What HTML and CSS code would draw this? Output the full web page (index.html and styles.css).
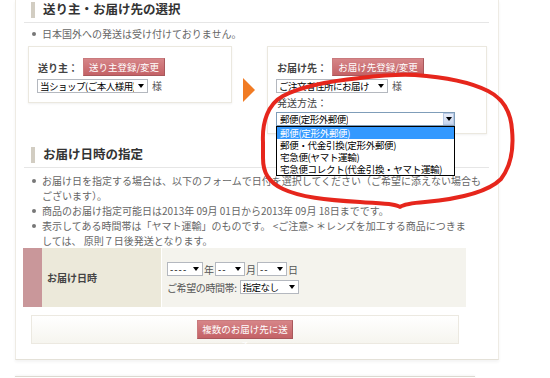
FILE: index.html
```html
<!DOCTYPE html>
<html>
<head>
    <meta charset="utf-8">
    <title>お届け先の選択</title>
    <link rel="stylesheet" href="styles.css">
</head>
<body>
<div class="page">
    <div class="panel">
        <h2 class="sec-title">送り主・お届け先の選択</h2>
        <ul class="notes first">
            <li>日本国外への発送は受け付けておりません。</li>
        </ul>

        <div class="addr-row">
            <div class="addr-box sender">
                <div class="addr-head">
                    <span class="addr-label">送り主：</span>
                    <button class="btn btn-sender">送り主登録/変更</button>
                </div>
                <div class="addr-line">
                    <span class="sel sel-sender"><span class="sel-text">当ショップ(ご本人様用)</span></span>
                    <span class="sama">様</span>
                </div>
            </div>

            <div class="arrow"></div>

            <div class="addr-box dest">
                <div class="addr-head">
                    <span class="addr-label">お届け先：</span>
                    <button class="btn btn-dest">お届け先登録/変更</button>
                </div>
                <div class="addr-line">
                    <span class="sel sel-dest"><span class="sel-text">ご注文者住所にお届け</span></span>
                    <span class="sama">様</span>
                </div>
                <div class="method-label">発送方法：</div>
                <div class="method-wrap">
                    <span class="sel-open">
                        <span class="sel-text">郵便(定形外郵便)</span>
                        <span class="drop-btn"></span>
                    </span>
                    <ul class="drop-list">
                        <li class="active">郵便(定形外郵便)</li>
                        <li>郵便・代金引換(定形外郵便)</li>
                        <li>宅急便(ヤマト運輸)</li>
                        <li>宅急便コレクト(代金引換・ヤマト運輸)</li>
                    </ul>
                </div>
            </div>
        </div>

        <h2 class="sec-title second">お届け日時の指定</h2>
        <ul class="notes">
            <li>お届け日を指定する場合は、以下のフォームで日付を選択してください（ご希望に添えない場合も<br>ございます）。</li>
            <li>商品のお届け指定可能日は2013年 09月 01日から2013年 09月 18日までです。</li>
            <li>表示してある時間帯は「ヤマト運輸」のものです。 &lt;ご注意&gt; ＊レンズを加工する商品につきま<br>しては、 原則７日後発送となります。</li>
        </ul>

        <div class="date-table">
            <div class="mark"></div>
            <div class="date-label">お届け日時</div>
            <div class="date-value">
                <div class="date-row">
                    <span class="sel sel-year"><span class="sel-text dash">----</span></span>
                    <span class="unit">年</span>
                    <span class="sel sel-md"><span class="sel-text dash">--</span></span>
                    <span class="unit">月</span>
                    <span class="sel sel-md"><span class="sel-text dash">--</span></span>
                    <span class="unit">日</span>
                </div>
                <div class="date-row">
                    <span class="time-label">ご希望の時間帯:</span>
                    <span class="sel sel-time"><span class="sel-text">指定なし</span></span>
                </div>
            </div>
        </div>

        <div class="multi-box">
            <button class="btn btn-multi">複数のお届け先に送る</button>
        </div>
    </div>

    <div class="panel-next"></div>

    <!-- hand-drawn marker around the shipping method menu -->
    <svg class="marker" width="550" height="378" viewBox="0 0 550 378">
        <path d="M263 142 C262 122 268 104 283 96 C300 87 330 81 360 78 C385 75 400 74 415 75 C445 77 470 82 488 91 C504 99 511 114 512 130 C514 150 510 167 501 179 C487 193 458 199 425 202 C412 203 404 204 400 207 C396 204 388 204 360 202 C325 200 300 197 283 189 C268 182 263 172 263 158 L263 142"
              fill="none" stroke="#e6261c" stroke-width="4" stroke-linecap="round" stroke-linejoin="round"/>
    </svg>
</div>
</body>
</html>
```

FILE: styles.css
```css
body {
    margin: 0;
    background-color: #fff;
    font-family: "Noto Sans CJK JP", sans-serif;
    font-size: 10px;
    color: #555;
}

.page {
    position: relative;
    width: 550px;
    height: 378px;
    overflow: hidden;
}

.panel {
    margin-left: 15px;
    width: 484px;
    box-sizing: border-box;
    padding: 0 9px 15px 8px;
    border-left: 1px solid #eeebe4;
    border-right: 1px solid #eeebe4;
    border-bottom: 1px solid #e4e1d8;
    box-shadow: 0 2px 3px rgba(0, 0, 0, 0.05);
}

.sec-title {
    margin: 0;
    height: 22px;
    border-bottom: 1px solid #e6e6e6;
    display: flex;
    align-items: flex-start;
    padding-left: 7px;
    font-size: 12.5px;
    line-height: 18px;
    color: #333;
}

.sec-title::before {
    content: "";
    width: 4px;
    height: 16px;
    margin-top: 2px;
    margin-right: 8px;
    background-color: #d2cdc2;
}

.sec-title.second {
    margin-top: 11px;
}

.notes {
    list-style: none;
    margin: 0;
    padding: 5px 0 0 0;
    line-height: 15px;
    white-space: nowrap;
    color: #666;
}

.notes.first {
    padding-top: 3px;
}

.notes li {
    display: flex;
}

.notes li::before {
    content: "";
    flex: none;
    width: 4px;
    height: 4px;
    border-radius: 50%;
    background-color: #777;
    margin: 6px 6px 0 8px;
}

.addr-row {
    display: flex;
    align-items: flex-start;
    margin: 5px 0 0 4px;
}

.addr-box {
    box-sizing: border-box;
    border: 1px solid #ebe8df;
    box-shadow: 0 1px 2px rgba(0, 0, 0, 0.06);
    background-color: #fff;
    padding: 11px 9px 9px 9px;
}

.sender {
    width: 204px;
}

.dest {
    width: 220px;
    padding-bottom: 7px;
}

.addr-head {
    display: flex;
    align-items: center;
    height: 18px;
}

.addr-label {
    font-weight: bold;
    color: #444;
    margin-right: 5px;
}

.addr-line {
    display: flex;
    align-items: center;
    margin-top: 2px;
    margin-left: -1px;
}

.sama {
    margin-left: 4px;
    color: #555;
}

.arrow {
    flex: none;
    width: 0;
    height: 0;
    margin: 32px 12px 0 11px;
    border-left: 12px solid #f17b23;
    border-top: 12px solid transparent;
    border-bottom: 12px solid transparent;
}

.btn {
    height: 18px;
    padding: 0 4px;
    border: 1px solid #a8585c;
    border-top-color: #c97a7d;
    border-left-color: #c97a7d;
    background: linear-gradient(#d68588, #c46266);
    color: #fff;
    font-family: "Noto Sans CJK JP", sans-serif;
    font-size: 9.5px;
    line-height: 16px;
    cursor: pointer;
}

.btn-sender {
    width: 82px;
}

.btn-dest {
    width: 92px;
}

.btn-multi {
    width: 96px;
    height: 19px;
}

.sel {
    display: inline-flex;
    align-items: center;
    box-sizing: border-box;
    height: 14px;
    border: 1px solid #b4b8bf;
    background-color: #fff;
    color: #000;
    padding-left: 2px;
    overflow: hidden;
}

.sel::after {
    content: "";
    flex: none;
    margin-left: auto;
    margin-right: 3px;
    border-left: 3px solid transparent;
    border-right: 3px solid transparent;
    border-top: 4px solid #000;
}

.sel-text {
    white-space: nowrap;
    overflow: hidden;
    font-size: 9.5px;
    line-height: 12px;
    letter-spacing: -0.5px;
    margin-right: 4px;
}

.sel-text.dash {
    letter-spacing: 1px;
}

.sel-sender {
    width: 111px;
}

.sel-dest {
    width: 112px;
}

.method-label {
    line-height: 19px;
    color: #444;
}

.method-wrap {
    position: relative;
    margin-left: -1px;
}

.sel-open {
    display: flex;
    align-items: center;
    box-sizing: border-box;
    width: 179px;
    height: 14px;
    border: 1px solid #7f9db9;
    background-color: #fff;
    color: #000;
    padding-left: 3px;
}

.drop-btn {
    margin-left: auto;
    width: 11px;
    height: 12px;
    box-sizing: border-box;
    border: 1px solid #b7c8e4;
    background: linear-gradient(#e8eef9, #c6d5ee);
    display: flex;
    align-items: center;
    justify-content: center;
}

.drop-btn::after {
    content: "";
    border-left: 3px solid transparent;
    border-right: 3px solid transparent;
    border-top: 4px solid #000;
}

.drop-list {
    position: absolute;
    top: 14px;
    left: 0;
    z-index: 5;
    width: 179px;
    box-sizing: border-box;
    margin: 0;
    padding: 0;
    list-style: none;
    border: 1px solid #000;
    background-color: #fff;
    color: #000;
}

.drop-list li {
    height: 12px;
    line-height: 12px;
    padding-left: 3px;
    font-size: 9.5px;
    letter-spacing: -0.3px;
    white-space: nowrap;
}

.drop-list li.active {
    background-color: #3399ff;
    color: #fff;
}

.date-table {
    display: grid;
    grid-template-columns: 19px 119px 305px;
    margin-left: -1px;
    height: 59px;
}

.mark {
    background-color: #c9979a;
}

.date-label {
    background-color: #ece9da;
    display: flex;
    align-items: center;
    padding-left: 5px;
    font-weight: bold;
    color: #444;
}

.date-value {
    background-color: #f4f3ed;
    border-left: 1px solid #fff;
    padding: 14px 6px 0 5px;
    display: flex;
    flex-direction: column;
    gap: 4px;
}

.date-row {
    display: flex;
    align-items: center;
    height: 14px;
}

.unit {
    margin: 0 1px;
    color: #555;
}

.sel-year {
    width: 36px;
}

.sel-md {
    width: 30px;
}

.sel-time {
    width: 59px;
}

.time-label {
    color: #555;
    letter-spacing: -0.4px;
    margin-right: 3px;
}

.multi-box {
    margin: 8px 0 0 7px;
    width: 428px;
    height: 29px;
    box-sizing: border-box;
    border: 1px solid #ece9e1;
    background: linear-gradient(#fff, #f6f5ef);
    display: flex;
    justify-content: center;
    align-items: center;
}

.panel-next {
    margin: 16px 0 0 15px;
    width: 460px;
    height: 40px;
    border-top: 1px solid #dcd9d0;
    box-shadow: 0 -1px 2px rgba(0, 0, 0, 0.04);
}

.marker {
    position: absolute;
    top: 0;
    left: 0;
    pointer-events: none;
}
```
